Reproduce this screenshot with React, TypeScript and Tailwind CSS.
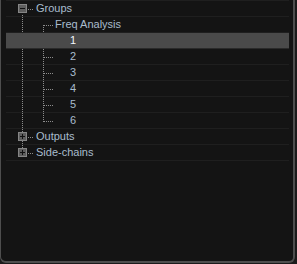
import React from 'react';

type Row = { label: string; level: 0 | 1 | 2; box?: 'minus' | 'plus'; selected?: boolean };

const rows: Row[] = [
  { label: 'Groups', level: 0, box: 'minus' },
  { label: 'Freq Analysis', level: 1 },
  { label: '1', level: 2, selected: true },
  { label: '2', level: 2 },
  { label: '3', level: 2 },
  { label: '4', level: 2 },
  { label: '5', level: 2 },
  { label: '6', level: 2 },
  { label: 'Outputs', level: 0, box: 'plus' },
  { label: 'Side-chains', level: 0, box: 'plus' },
];

const ExpandBox = ({ kind }: { kind: 'minus' | 'plus' }) => (
  <svg width="9" height="9" viewBox="0 0 9 9" shapeRendering="crispEdges" className="shrink-0">
    <rect x="0.5" y="0.5" width="8" height="8" fill="#5e5e5e" stroke="#858585" />
    <rect x="2" y="4" width="5" height="1" fill="#111" />
    {kind === 'plus' && <rect x="4" y="2" width="1" height="5" fill="#111" />}
  </svg>
);

// dotted tree connectors, coordinates relative to the row list
const Connectors = () => {
  const dot = { stroke: '#8c8c8c', strokeWidth: 1, strokeDasharray: '1 1' };
  const kids = [40, 56, 72, 88, 104, 120];
  return (
    <svg className="pointer-events-none absolute left-0 top-0" width="290" height="170" shapeRendering="crispEdges">
      <line x1="16.5" y1="14" x2="16.5" y2="148" {...dot} />
      <line x1="22" y1="8.5" x2="28" y2="8.5" {...dot} />
      <line x1="22" y1="136.5" x2="28" y2="136.5" {...dot} />
      <line x1="22" y1="152.5" x2="28" y2="152.5" {...dot} />
      <line x1="37.5" y1="24" x2="37.5" y2="121" {...dot} />
      <line x1="38" y1="24.5" x2="47" y2="24.5" {...dot} />
      {kids.map((y) => (
        <line key={y} x1="38" y1={y + 0.5} x2="47" y2={y + 0.5} {...dot} />
      ))}
    </svg>
  );
};

const App = () => {
  return (
    <div className="w-[297px] h-[264px] bg-[#1b1b1b]" style={{ fontFamily: '"Liberation Sans", Arial, sans-serif' }}>
      <div className="w-[295px] h-[263px] bg-[#141414] border-l border-r-2 border-b-2 border-[#4e4e4e] rounded-b-[6px] pl-[5px] pr-[4px]">
        <div className="relative border-t border-[#1f1f1f]">
          <Connectors />
          {rows.map((r) => (
            <div
              key={r.label}
              className={`relative flex h-[16px] items-center border-b text-[11px] leading-none ${
                r.selected ? 'bg-[#4a4a4a] border-[#2a2a2a] text-[#f2f8ff]' : 'border-[#1f1f1f] text-[#a9bccd]'
              } ${r.level === 0 ? 'pl-[12px]' : r.level === 1 ? 'pl-[49px]' : 'pl-[64px]'}`}
            >
              {r.box && <ExpandBox kind={r.box} />}
              <span className={r.box ? 'ml-[9px]' : ''}>{r.label}</span>
            </div>
          ))}
        </div>
      </div>
    </div>
  );
};

export default App;
